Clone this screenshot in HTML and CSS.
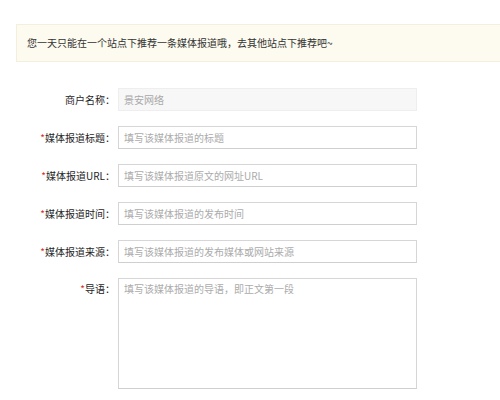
FILE: index.html
```html
<!DOCTYPE html>
<html lang="zh-CN">
<head>
<meta charset="utf-8">
<title>媒体报道推荐</title>
<link rel="stylesheet" href="styles.css">
</head>
<body>
<div class="page">
  <div class="notice">您一天只能在一个站点下推荐一条媒体报道哦，去其他站点下推荐吧~</div>
  <form class="form">
    <div class="row">
      <label class="label">商户名称：</label>
      <div class="field readonly">景安网络</div>
    </div>
    <div class="row">
      <label class="label"><span class="req">*</span>媒体报道标题：</label>
      <input class="field" type="text" placeholder="填写该媒体报道的标题">
    </div>
    <div class="row">
      <label class="label"><span class="req">*</span>媒体报道URL：</label>
      <input class="field" type="text" placeholder="填写该媒体报道原文的网址URL">
    </div>
    <div class="row">
      <label class="label"><span class="req">*</span>媒体报道时间：</label>
      <input class="field" type="text" placeholder="填写该媒体报道的发布时间">
    </div>
    <div class="row">
      <label class="label"><span class="req">*</span>媒体报道来源：</label>
      <input class="field" type="text" placeholder="填写该媒体报道的发布媒体或网站来源">
    </div>
    <div class="row row-top">
      <label class="label"><span class="req">*</span>导语：</label>
      <textarea class="field area" placeholder="填写该媒体报道的导语，即正文第一段"></textarea>
    </div>
  </form>
</div>
</body>
</html>
```
FILE: styles.css
```css
html, body {
  margin: 0;
  padding: 0;
  background: #fff;
  overflow: hidden;
}
body {
  font-family: "Noto Sans CJK SC", "Liberation Sans", sans-serif;
  font-size: 10px;
  color: #333;
}
.page {
  width: 484px;
  padding: 24px 0 0 16px;
}
.notice {
  box-sizing: border-box;
  height: 38px;
  line-height: 36px;
  padding-left: 10px;
  background: #fdfbef;
  border: 1px solid #f4efdc;
  border-right: none;
  color: #333;
  font-size: 10px;
}
.form {
  display: flex;
  flex-direction: column;
  gap: 15px;
  margin-top: 26px;
}
.row {
  display: flex;
  align-items: center;
  gap: 3px;
}
.row-top {
  align-items: flex-start;
}
.row-top .label {
  padding-top: 4px;
}
.label {
  width: 99px;
  text-align: right;
  color: #1e1e1e;
  font-size: 10px;
  line-height: 14px;
  white-space: nowrap;
}
.req {
  color: #e0262b;
}
.field {
  box-sizing: border-box;
  width: 299px;
  height: 23px;
  margin: 0;
  padding: 0 5px;
  border: 1px solid #d6d6d6;
  border-bottom-color: #cfcfcf;
  background: #fff;
  font-family: "Noto Sans CJK SC", "Liberation Sans", sans-serif;
  font-size: 10px;
  color: #333;
  outline: none;
  line-height: 21px;
}
.field::placeholder {
  color: #ababab;
}
.readonly {
  background: #f7f7f7;
  border-color: #eeeeee;
  color: #a8a8a8;
}
.area {
  height: 111px;
  padding: 3px 5px;
  line-height: 14px;
  resize: none;
  display: block;
}
```
